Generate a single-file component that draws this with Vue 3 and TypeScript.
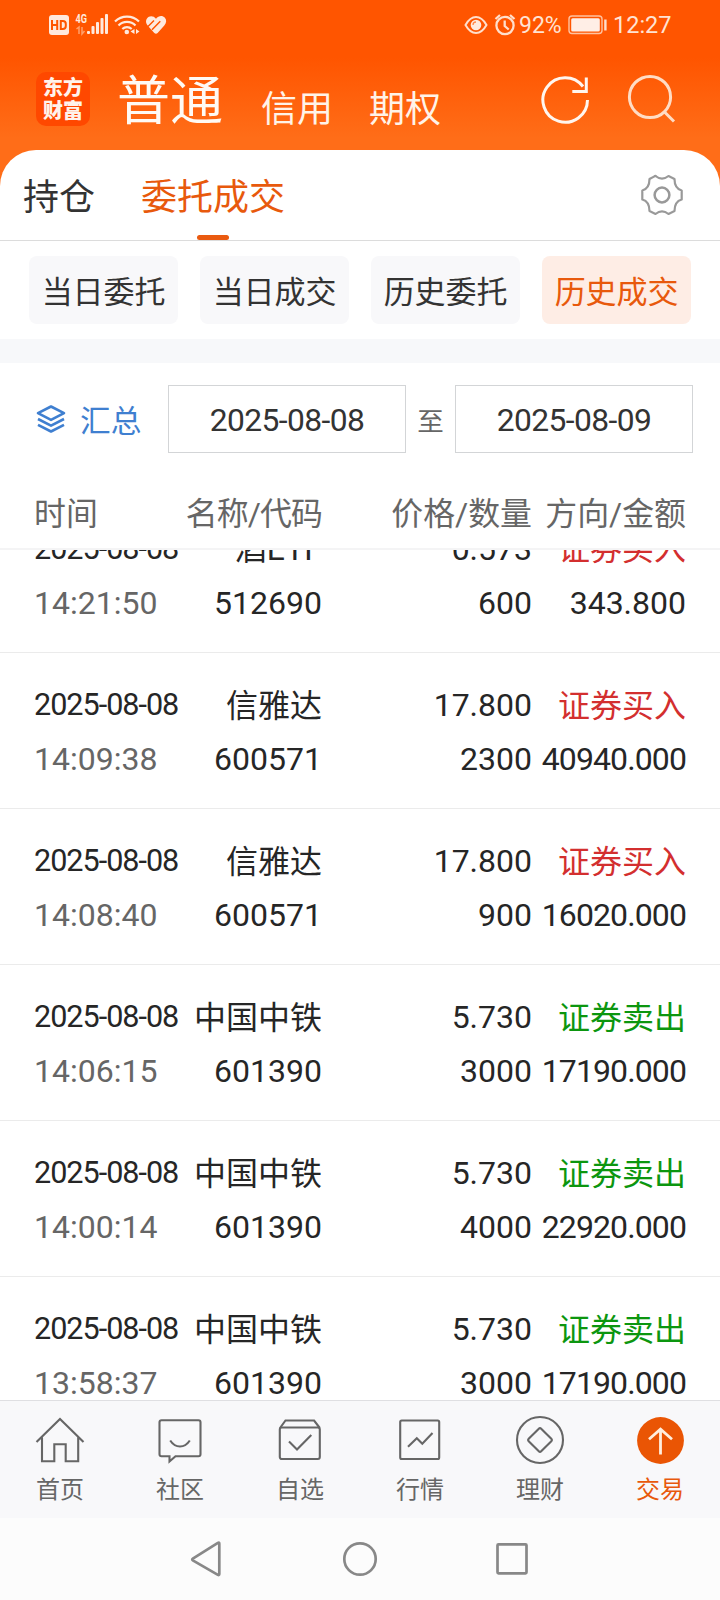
<script setup lang="ts">
interface Trade {
  date: string
  time: string
  name: string
  code: string
  price: string
  qty: string
  side: 'buy' | 'sell'
  amount: string
}

const sideLabel: Record<Trade['side'], string> = { buy: '证券买入', sell: '证券卖出' }

const filters: string[] = ['当日委托', '当日成交', '历史委托', '历史成交']
const activeFilter = '历史成交'

const trades: Trade[] = [
  { date: '2025-08-08', time: '14:21:50', name: '酒ETF', code: '512690', price: '0.573', qty: '600', side: 'buy', amount: '343.800' },
  { date: '2025-08-08', time: '14:09:38', name: '信雅达', code: '600571', price: '17.800', qty: '2300', side: 'buy', amount: '40940.000' },
  { date: '2025-08-08', time: '14:08:40', name: '信雅达', code: '600571', price: '17.800', qty: '900', side: 'buy', amount: '16020.000' },
  { date: '2025-08-08', time: '14:06:15', name: '中国中铁', code: '601390', price: '5.730', qty: '3000', side: 'sell', amount: '17190.000' },
  { date: '2025-08-08', time: '14:00:14', name: '中国中铁', code: '601390', price: '5.730', qty: '4000', side: 'sell', amount: '22920.000' },
  { date: '2025-08-08', time: '13:58:37', name: '中国中铁', code: '601390', price: '5.730', qty: '3000', side: 'sell', amount: '17190.000' },
]
</script>

<template>
  <div class="screen">
    <header class="top">
      <div class="status">
        <svg class="status-left" width="120" height="24" viewBox="48 13 120 24">
          <rect x="49" y="15" width="20" height="20" rx="3" fill="#ffe9dd" />
          <g fill="none" stroke="#ff5500" stroke-width="2">
            <path d="M52 20v10M57.200 20v10M52 25h5.200M60.800 21h2a3 3 0 0 1 3 3v2a3 3 0 0 1-3 3h-2z" />
          </g>
          <text x="75.500" y="23" class="net" textLength="11.500" lengthAdjust="spacingAndGlyphs">4G</text>
          <g stroke="#ffa06c" stroke-width="1.500" fill="none">
            <path d="M76.500 29l2.500-2v7M84.500 31l-2.500 3v-7" />
          </g>
          <g fill="#ffe9dd">
            <rect x="87" y="31" width="3" height="3" rx="1" />
            <rect x="91.500" y="26" width="3" height="8" rx="1" />
            <rect x="96" y="22" width="3" height="12" rx="1" />
            <rect x="100.500" y="18" width="3" height="16" rx="1" />
            <rect x="105" y="14" width="3" height="20" rx="1" />
          </g>
          <g fill="none" stroke="#ffe9dd" stroke-width="2.200">
            <path d="M115 21.500a17 17 0 0 1 24 0M118.500 25.500a12 12 0 0 1 17 0M122.300 29a7 7 0 0 1 9.400 0" />
          </g>
          <circle cx="126.800" cy="32" r="2.300" fill="#ffe9dd" />
          <path d="M134.500 29v5l-4-2.500zM136 29v5l3.500-2.500z" fill="#ffe9dd" />
          <path d="M156 18.800C153.500 15.500 149 15.500 147 18.500c-2 3-.6 5.700 1.500 7.900l5.800 6.500q1.700 1.500 3.300 0l6.700-7.500c2.200-2.500 2.500-5.500.6-7.600-2.500-2.700-6.200-2.400-8.900 1z" fill="#ffe9dd" />
          <path d="M154 20.500l-6 6M160.300 21.300l-8.300 8.500" stroke="#ff5500" stroke-width="1.500" fill="none" />
        </svg>
        <svg class="status-eye" width="54" height="24" viewBox="463 13 54 24">
          <path d="M465.500 25q4.500-8 10.500-8t10.500 8q-4.500 8-10.500 8t-10.500-8z" fill="none" stroke="#ffdfcc" stroke-width="2" />
          <circle cx="476" cy="25" r="5.300" fill="#ffeadf" />
          <path d="M473 25a3 3 0 0 1 3-3" stroke="#ff8a50" stroke-width="1.300" fill="none" />
          <g fill="none" stroke="#ffdfcc" stroke-width="2.300">
            <circle cx="505" cy="25.500" r="8.600" />
            <path d="M504.700 20.500v5.500l4 3.500M495.500 19l4.500-4M514.500 19l-4.500-4" />
          </g>
        </svg>
        <span class="pct">92%</span>
        <svg class="battery" width="40" height="20" viewBox="0 0 40 20">
          <rect x="1" y="1" width="33" height="17.500" rx="3" fill="none" stroke="#ffc2a0" stroke-width="1.400" />
          <rect x="3.200" y="3.200" width="28.600" height="13.200" rx="1.500" fill="#ffeee6" />
          <path d="M37.400 4.500v11" stroke="#ffdfcc" stroke-width="2.400" />
        </svg>
        <span class="clock">12:27</span>
      </div>
      <div class="brandbar">
        <div class="logo"><span>东方</span><span>财富</span></div>
        <h1 class="mode-main">普通</h1>
        <span class="mode">信用</span>
        <span class="mode second">期权</span>
        <svg class="top-icons" width="136" height="52" viewBox="540 73 136 52">
          <g fill="none" stroke="#fff6ef" stroke-width="3">
            <path d="M587.500 100a22.300 22.300 0 1 1-4.500-13.500" />
            <path d="M586.300 77.500v14h-14" />
          </g>
          <g fill="none" stroke="#ffdcc4" stroke-width="3">
            <circle cx="650" cy="97" r="20.600" />
            <path d="M664.500 112l9.500 9.500" />
          </g>
        </svg>
      </div>
    </header>

    <main class="card">
      <nav class="tabs">
        <span class="tab">持仓</span>
        <span class="tab active"><span>委托成交</span></span>
        <svg class="gear" width="44" height="44" viewBox="-22 -22 44 44" fill="none" stroke="#999" stroke-width="2.200">
          <path d="M-6-19Q-7-19.300-8-18.400L-12.500-16Q-12.500-6.500-19.700-4.500V4.500Q-12.500 6.500-12.500 16L-6.500 19Q0 13.800 6.500 19L12.500 16Q12.500 6.500 19.700 4.500V-4.500Q12.500-6.500 12.500-16L6.500-19Q0-13.800-6.500-19z" stroke-linejoin="round" />
          <circle r="7.400" stroke-width="2.500" />
        </svg>
      </nav>

      <div class="filters">
        <button v-for="f in filters" :key="f" class="filter" :class="{ on: f === activeFilter }">{{ f }}</button>
      </div>
      <div class="band"></div>

      <div class="range">
        <svg class="layers" width="30" height="30" viewBox="36 404 30 30" fill="none" stroke="#3f7fd0" stroke-width="2.600" stroke-linejoin="round">
          <path d="M51 406.500l13 6.700-13 6.700-13-6.700z" />
          <path d="M38 419l13 6.700 13-6.700M38 424.800l13 6.700 13-6.700" />
        </svg>
        <span class="sum">汇总</span>
        <div class="date">2025-08-08</div>
        <span class="to">至</span>
        <div class="date">2025-08-09</div>
      </div>

      <div class="cols head">
        <span>时间</span><span class="snug">名称/代码</span><span>价格/数量</span><span>方向/金额</span>
      </div>

      <section class="list">
        <div class="rows">
          <div v-for="t in trades" :key="t.time" class="cols row">
            <span class="day">{{ t.date }}</span>
            <span class="cn">{{ t.name }}</span>
            <span>{{ t.price }}</span>
            <span class="cn" :class="t.side">{{ sideLabel[t.side] }}</span>
            <span class="time">{{ t.time }}</span>
            <span>{{ t.code }}</span>
            <span>{{ t.qty }}</span>
            <span :class="{ tight: t.amount.length > 8 }">{{ t.amount }}</span>
          </div>
        </div>
      </section>
    </main>

    <nav class="bottom">
      <div class="item">
        <svg viewBox="0 0 50 50">
          <path d="M1.500 25L25 2l23.500 23M7 20.500v23.700h12.300v-17h11.400v17H43.200V20.500" />
        </svg>
        <span>首页</span>
      </div>
      <div class="item">
        <svg viewBox="0 0 50 50">
          <path d="M6.500 3.200h37q2 0 2 2v32q0 2-2 2H20.500L14.500 44.500V39.200H6.500q-2 0-2-2v-32q0-2 2-2z" />
          <path d="M15.200 23.500q4 6 9.800 6t9.800-6" />
        </svg>
        <span>社区</span>
      </div>
      <div class="item">
        <svg viewBox="0 0 50 50">
          <rect x="4.800" y="10.500" width="40" height="31.500" rx="2" />
          <path d="M5 11l5.500-7.500h28.600L44.800 11M14 24.500l8 8L36.300 18" />
        </svg>
        <span>自选</span>
      </div>
      <div class="item">
        <svg viewBox="0 0 50 50">
          <rect x="5.200" y="3.500" width="39" height="38.500" rx="1.500" />
          <path d="M13 29.800l8.800-8.600 5.500 5.500L37.500 16" />
        </svg>
        <span>行情</span>
      </div>
      <div class="item">
        <svg viewBox="0 0 50 50">
          <circle cx="25" cy="23" r="23" />
          <path d="M23.800 11.700q1.200-1.200 2.400 0l10.100 10.100q1.200 1.200 0 2.400L26.200 34.300q-1.200 1.200-2.400 0L13.700 24.200q-1.200-1.200 0-2.400z" />
        </svg>
        <span>理财</span>
      </div>
      <div class="item current">
        <svg viewBox="0 0 50 50">
          <circle cx="25.500" cy="23.500" r="23.400" class="disc" />
          <path d="M25.500 37.500V12M14 22.200L25.500 12.200 37 22.200" class="arrow" />
        </svg>
        <span>交易</span>
      </div>
    </nav>

    <footer class="system">
      <svg viewBox="0 0 340 40" width="340" height="40" fill="none" stroke="#888" stroke-width="2.700" stroke-linejoin="round">
        <path d="M29.300 4.700v30.300q0 1.500-1.400.8L2.800 21.300q-1.200-.8 0-1.600L27.900 3.900q1.400-.7 1.400.8z" />
        <circle cx="170" cy="20" r="15.700" />
        <rect x="307.500" y="5.300" width="29" height="29" rx="1" />
      </svg>
    </footer>
  </div>
</template>

<style>
body {
  margin: 0;
}
</style>

<style scoped>
.screen {
  width: 720px;
  height: 1600px;
  display: flex;
  flex-direction: column;
  overflow: hidden;
  box-sizing: border-box;
  background: linear-gradient(#ff5500 0, #ff5500 58px, #ff6d18 138px, #ff6d18 220px, #fff 221px);
  font-family: Roboto, "Noto Sans CJK SC", sans-serif;
  color: #262626;
}
.top {
  height: 150px;
  flex: none;
}
.status {
  display: flex;
  align-items: center;
  height: 50px;
  padding-left: 48px;
  color: #ffe3d3;
  font-size: 23.500px;
}
.net {
  font: 700 12px Roboto, sans-serif;
  fill: #ffe9dd;
}
.status-eye {
  margin-left: 295px;
}
.pct {
  width: 49px;
  margin-left: 2px;
  font-size: 23px;
}
.clock {
  margin-left: 5px;
}
.brandbar {
  display: flex;
  height: 100px;
  padding-left: 36px;
}
.logo {
  width: 54px;
  height: 54px;
  margin-top: 22px;
  border-radius: 10px;
  background: #ff4800;
  color: #fff3eb;
  display: flex;
  flex-direction: column;
  align-items: center;
  justify-content: center;
  font-size: 20px;
  font-weight: 900;
  line-height: 23px;
}
.logo span {
  padding-top: 1px;
  height: 22px;
}
.mode-main {
  margin: 20px 0 0 27px;
  font-size: 53px;
  font-weight: 400;
  line-height: 64px;
  color: #fffaf4;
}
.mode {
  margin: 38px 0 0 38px;
  font-size: 36px;
  line-height: 44px;
  color: #fff3e8;
}
.mode.second {
  margin-left: 36px;
}
.top-icons {
  margin: 23px 0 0 99px;
}
.card {
  flex: none;
  height: 1250px;
  display: flex;
  flex-direction: column;
  overflow: hidden;
  background: #fff;
  border-radius: 36px 36px 0 0;
}
.tabs {
  display: flex;
  height: 90px;
  flex: none;
  padding-left: 23px;
  border-bottom: 1px solid #dcdcdc;
  font-size: 36px;
  line-height: 97px;
  color: #333;
}
.tab.active {
  position: relative;
  height: 90px;
  margin-left: 46px;
  color: #e8590c;
}
.tab.active::after {
  content: "";
  position: absolute;
  left: 56px;
  bottom: 0;
  width: 32px;
  height: 5px;
  border-radius: 2.500px;
  background: #ea5a10;
}
.gear {
  margin: 23px 36px 0 auto;
}
.filters {
  display: flex;
  gap: 22px;
  flex: none;
  height: 98px;
  box-sizing: border-box;
  padding: 15px 29px;
}
.filter {
  width: 149px;
  height: 68px;
  flex: none;
  padding: 5px 0 0;
  border: 0;
  border-radius: 8px;
  background: #f8f8fa;
  color: #333;
  font: 31px/63px Roboto, "Noto Sans CJK SC", sans-serif;
  letter-spacing: -0.1px;
}
.filter.on {
  background: #feede5;
  color: #e8590c;
}
.band {
  height: 24px;
  flex: none;
  background: #f7f8fa;
}
.range {
  display: flex;
  align-items: center;
  flex: none;
  height: 68px;
  padding: 22px 0 0 36px;
}
.sum {
  width: 88px;
  margin-left: 14px;
  margin-top: -2px;
  font-size: 30.700px;
  color: #3f7fd0;
}
.date {
  width: 238px;
  height: 68px;
  box-sizing: border-box;
  border: 1px solid #d3d5d7;
  text-align: center;
  font-size: 31.800px;
  letter-spacing: -0.6px;
  line-height: 68px;
  color: #333;
}
.to {
  width: 49px;
  text-align: center;
  font-size: 26.500px;
  color: #666;
}
.cols {
  display: grid;
  grid-template-columns: 150px 137px 210px 154px;
  padding: 0 34px 0 35px;
  font-size: 32px;
  text-align: right;
  white-space: nowrap;
}
.cols > :nth-child(4n + 1) {
  text-align: left;
}
.head {
  flex: none;
  height: 95px;
  border-bottom: 2px solid #f4f4f5;
  line-height: 123px;
  font-size: 31.900px;
  color: #666;
}
.head > :first-child {
  margin-left: -1px;
}
.snug {
  margin-left: -1px;
  letter-spacing: -0.9px;
}
.list {
  flex: 1;
  min-height: 0;
  overflow: hidden;
}
.rows {
  margin-top: -53px;
}
.row {
  height: 156px;
  box-sizing: border-box;
  padding-top: 25px;
  grid-template-rows: 54px 54px;
  line-height: 54px;
  border-bottom: 1px solid #ebebeb;
}
.row:not(:first-child) .cn {
  padding-top: 1px;
}
.day {
  margin-left: -1px;
  font-size: 30.600px;
  letter-spacing: -1.020px;
}
.time {
  margin-left: -1px;
  color: #666;
}
.tight {
  letter-spacing: -0.900px;
}
.buy {
  color: #d32f2f;
}
.sell {
  color: #0c960f;
}
.bottom {
  flex: none;
  display: grid;
  grid-template-columns: repeat(6, 120px);
  height: 118px;
  box-sizing: border-box;
  border-top: 1px solid #dfdfe2;
  background: #f8f8fa;
}
.item {
  display: flex;
  flex-direction: column;
  align-items: center;
  padding-top: 16px;
  font-size: 24px;
  line-height: 34px;
  color: #666;
}
.item svg {
  width: 50px;
  height: 50px;
  overflow: visible;
  margin-bottom: 6px;
  fill: none;
  stroke: #666;
  stroke-width: 2.100;
}
.item.current {
  color: #e8590c;
}
.item .disc {
  fill: #ea5504;
  stroke: none;
}
.item .arrow {
  stroke: #ffeedd;
  stroke-width: 2.800;
}
.system {
  flex: none;
  height: 82px;
  display: flex;
  justify-content: center;
  background: #fcfcfc;
}
.system svg {
  margin-top: 21px;
}
</style>
